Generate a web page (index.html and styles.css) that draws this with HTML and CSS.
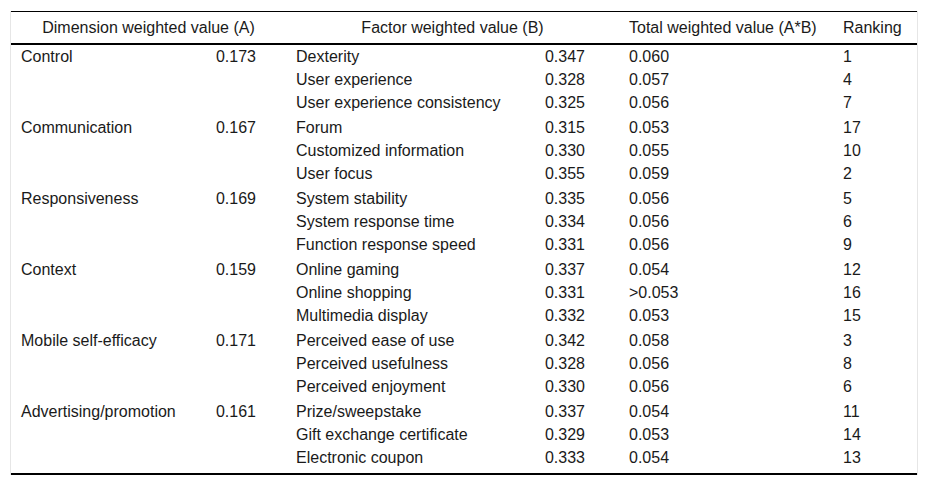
FILE: index.html
```html
<!DOCTYPE html>
<html lang="en">
<head>
<meta charset="utf-8">
<title>Weighted values</title>
<link rel="stylesheet" href="styles.css">
</head>
<body>
<div class="wrap">
<table class="tbl">
<colgroup>
<col class="c1"><col class="c2"><col class="c3"><col class="c4"><col class="c5"><col class="c6">
</colgroup>
<thead>
<tr>
<th colspan="2" class="h-dim">Dimension weighted value (A)</th>
<th colspan="2" class="h-fac">Factor weighted value (B)</th>
<th class="h-tot">Total weighted value (A*B)</th>
<th class="h-rank">Ranking</th>
</tr>
</thead>
<tbody>
<tr><td class="dn">Control</td><td class="dv">0.173</td><td class="fn">Dexterity</td><td class="fv">0.347</td><td class="tv">0.060</td><td class="rk">1</td></tr>
<tr><td class="dn"></td><td class="dv"></td><td class="fn">User experience</td><td class="fv">0.328</td><td class="tv">0.057</td><td class="rk">4</td></tr>
<tr class="end"><td class="dn"></td><td class="dv"></td><td class="fn">User experience consistency</td><td class="fv">0.325</td><td class="tv">0.056</td><td class="rk">7</td></tr>

<tr><td class="dn">Communication</td><td class="dv">0.167</td><td class="fn">Forum</td><td class="fv">0.315</td><td class="tv">0.053</td><td class="rk">17</td></tr>
<tr><td class="dn"></td><td class="dv"></td><td class="fn">Customized information</td><td class="fv">0.330</td><td class="tv">0.055</td><td class="rk">10</td></tr>
<tr class="end"><td class="dn"></td><td class="dv"></td><td class="fn">User focus</td><td class="fv">0.355</td><td class="tv">0.059</td><td class="rk">2</td></tr>

<tr><td class="dn">Responsiveness</td><td class="dv">0.169</td><td class="fn">System stability</td><td class="fv">0.335</td><td class="tv">0.056</td><td class="rk">5</td></tr>
<tr><td class="dn"></td><td class="dv"></td><td class="fn">System response time</td><td class="fv">0.334</td><td class="tv">0.056</td><td class="rk">6</td></tr>
<tr class="end"><td class="dn"></td><td class="dv"></td><td class="fn">Function response speed</td><td class="fv">0.331</td><td class="tv">0.056</td><td class="rk">9</td></tr>

<tr><td class="dn">Context</td><td class="dv">0.159</td><td class="fn">Online gaming</td><td class="fv">0.337</td><td class="tv">0.054</td><td class="rk">12</td></tr>
<tr><td class="dn"></td><td class="dv"></td><td class="fn">Online shopping</td><td class="fv">0.331</td><td class="tv">&gt;0.053</td><td class="rk">16</td></tr>
<tr class="end"><td class="dn"></td><td class="dv"></td><td class="fn">Multimedia display</td><td class="fv">0.332</td><td class="tv">0.053</td><td class="rk">15</td></tr>

<tr><td class="dn">Mobile self-efficacy</td><td class="dv">0.171</td><td class="fn">Perceived ease of use</td><td class="fv">0.342</td><td class="tv">0.058</td><td class="rk">3</td></tr>
<tr><td class="dn"></td><td class="dv"></td><td class="fn">Perceived usefulness</td><td class="fv">0.328</td><td class="tv">0.056</td><td class="rk">8</td></tr>
<tr class="end"><td class="dn"></td><td class="dv"></td><td class="fn">Perceived enjoyment</td><td class="fv">0.330</td><td class="tv">0.056</td><td class="rk">6</td></tr>

<tr><td class="dn">Advertising/promotion</td><td class="dv">0.161</td><td class="fn">Prize/sweepstake</td><td class="fv">0.337</td><td class="tv">0.054</td><td class="rk">11</td></tr>
<tr><td class="dn"></td><td class="dv"></td><td class="fn">Gift exchange certificate</td><td class="fv">0.329</td><td class="tv">0.053</td><td class="rk">14</td></tr>
<tr class="end last"><td class="dn"></td><td class="dv"></td><td class="fn">Electronic coupon</td><td class="fv">0.333</td><td class="tv">0.054</td><td class="rk">13</td></tr>
</tbody>
</table>
</div>
</body>
</html>
```

FILE: styles.css
```css
html, body {
  margin: 0;
  padding: 0;
  background: #ffffff;
}

body {
  font-family: "Liberation Sans", Arial, sans-serif;
  font-size: 16px;
  color: #1a1a1a;
}

.wrap {
  margin: 11px 0 0 10px;
  width: 906px;
  border-left: 1px solid #e6e6e6;
  border-right: 1px solid #e6e6e6;
}

.tbl {
  width: 906px;
  table-layout: fixed;
  border-collapse: collapse;
  border-top: 1px solid #000;
  border-bottom: 2px solid #000;
}

.c1 { width: 185px; }
.c2 { width: 90px; }
.c3 { width: 239px; }
.c4 { width: 94px; }
.c5 { width: 214px; }
.c6 { width: 84px; }

.tbl th {
  font-weight: normal;
  line-height: 23px;
  padding: 4px 10px;
  border-bottom: 2px solid #000;
  white-space: nowrap;
}

.h-dim { text-align: center; }
.h-fac { text-align: center; padding-left: 17px; }
.h-tot { text-align: left; }
.h-rank { text-align: left; }

.tbl td {
  line-height: 23px;
  padding: 0 10px;
  vertical-align: top;
  white-space: nowrap;
  text-align: left;
}

.tbl td.dv { text-align: right; padding-right: 30px; }
.tbl td.fv { text-align: right; padding-right: 34px; }

.tbl tr.end td { padding-bottom: 2px; }
.tbl tr.last td { padding-bottom: 4px; }
```
